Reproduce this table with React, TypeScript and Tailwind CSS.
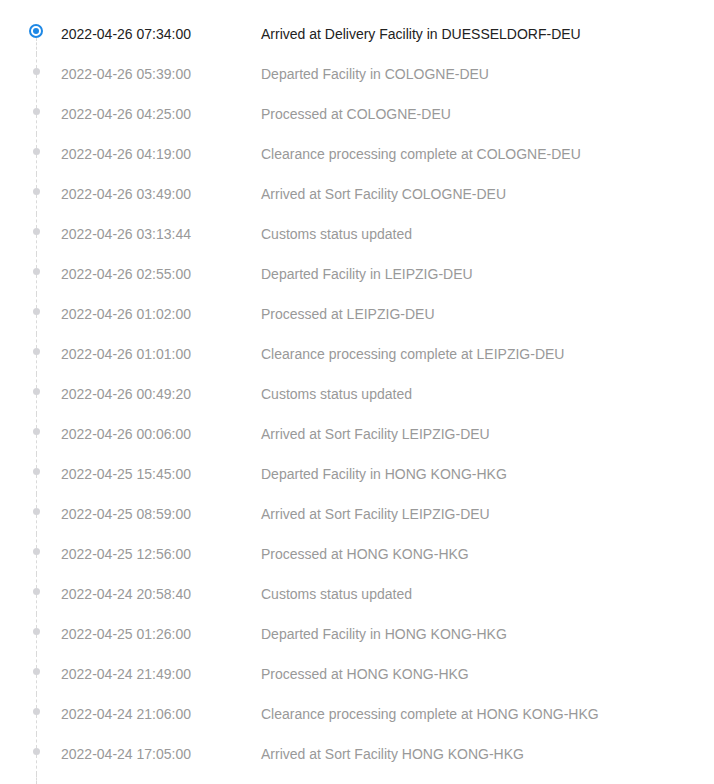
const events: [string, string][] = [
  ["2022-04-26 07:34:00", "Arrived at Delivery Facility in DUESSELDORF-DEU"],
  ["2022-04-26 05:39:00", "Departed Facility in COLOGNE-DEU"],
  ["2022-04-26 04:25:00", "Processed at COLOGNE-DEU"],
  ["2022-04-26 04:19:00", "Clearance processing complete at COLOGNE-DEU"],
  ["2022-04-26 03:49:00", "Arrived at Sort Facility COLOGNE-DEU"],
  ["2022-04-26 03:13:44", "Customs status updated"],
  ["2022-04-26 02:55:00", "Departed Facility in LEIPZIG-DEU"],
  ["2022-04-26 01:02:00", "Processed at LEIPZIG-DEU"],
  ["2022-04-26 01:01:00", "Clearance processing complete at LEIPZIG-DEU"],
  ["2022-04-26 00:49:20", "Customs status updated"],
  ["2022-04-26 00:06:00", "Arrived at Sort Facility LEIPZIG-DEU"],
  ["2022-04-25 15:45:00", "Departed Facility in HONG KONG-HKG"],
  ["2022-04-25 08:59:00", "Arrived at Sort Facility LEIPZIG-DEU"],
  ["2022-04-25 12:56:00", "Processed at HONG KONG-HKG"],
  ["2022-04-24 20:58:40", "Customs status updated"],
  ["2022-04-25 01:26:00", "Departed Facility in HONG KONG-HKG"],
  ["2022-04-24 21:49:00", "Processed at HONG KONG-HKG"],
  ["2022-04-24 21:06:00", "Clearance processing complete at HONG KONG-HKG"],
  ["2022-04-24 17:05:00", "Arrived at Sort Facility HONG KONG-HKG"],
];

export default function App() {
  return (
    <div
      className="flex h-[784px] flex-col overflow-hidden bg-white pt-[14px] text-[14px]"
      style={{ fontFamily: '"Liberation Sans", Arial, sans-serif' }}
    >
      {events.map(([date, desc], i) => {
        const first = i === 0;
        return (
          <div key={i} className="flex h-10 shrink-0">
            <div className="ml-[29px] flex w-[14px] flex-col items-center">
              <div
                className={
                  first
                    ? "h-[10px]"
                    : "h-[14px] border-l border-dashed border-[#d9d9d9]"
                }
              />
              {first ? (
                <div className="flex size-[14px] items-center justify-center rounded-full border-2 border-[#1e88e5] bg-white">
                  <div className="size-[6px] rounded-full bg-[#1e88e5]" />
                </div>
              ) : (
                <div className="size-[7px] rounded-full bg-[#d4d4d8]" />
              )}
              <div className="flex-1 border-l border-dashed border-[#d9d9d9]" />
            </div>
            <div
              className={`ml-[18px] flex w-[200px] items-center ${
                first ? "text-[#222]" : "text-[#999]"
              }`}
            >
              {date}
            </div>
            <div
              className={`flex items-center ${
                first ? "text-[#222]" : "text-[#999]"
              }`}
            >
              {desc}
            </div>
          </div>
        );
      })}
      <div className="ml-[29px] flex w-[14px] flex-1 justify-center">
        <div className="border-l border-dashed border-[#d9d9d9]" />
      </div>
    </div>
  );
}
